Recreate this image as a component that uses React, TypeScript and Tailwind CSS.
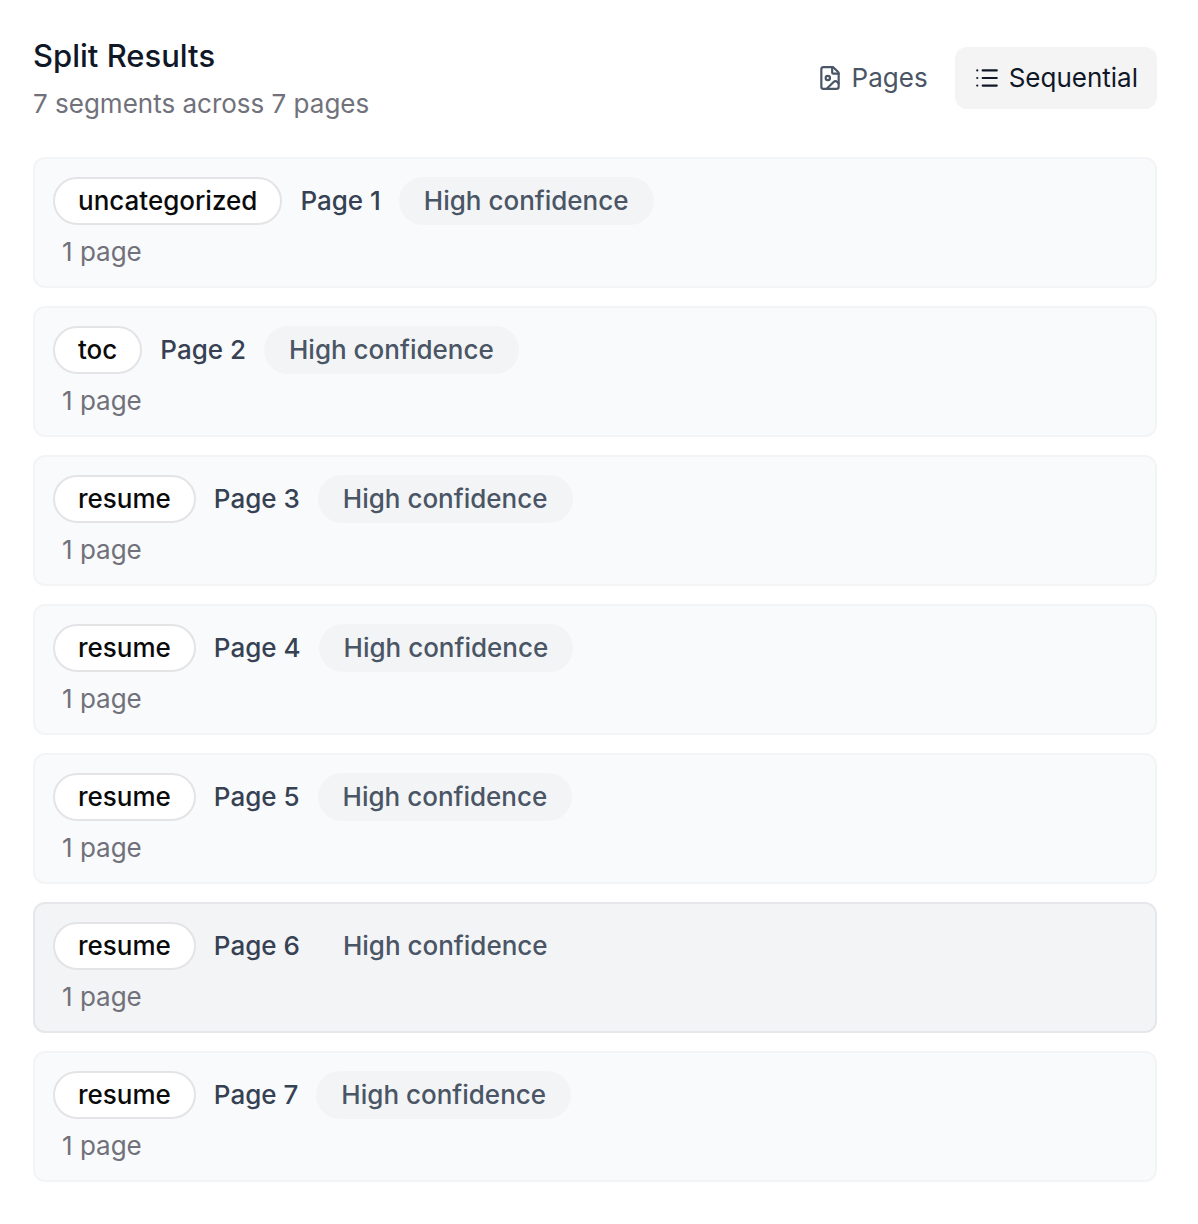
import { FileImage, List } from 'lucide-react';

type Segment = {
	category: string;
	page: number;
	active?: boolean;
};

const segments: Segment[] = [
	{ category: 'uncategorized', page: 1 },
	{ category: 'toc', page: 2 },
	{ category: 'resume', page: 3 },
	{ category: 'resume', page: 4 },
	{ category: 'resume', page: 5 },
	{ category: 'resume', page: 6, active: true },
	{ category: 'resume', page: 7 },
];

function SegmentCard({ category, page, active }: Segment) {
	return (
		<li
			className={`rounded-xl border-2 px-[18px] pt-[18px] pb-4 ${
				active ? 'border-gray-200 bg-gray-100' : 'border-gray-100 bg-gray-50'
			}`}
		>
			<div className="flex items-center gap-[18px] text-[26px] leading-8 font-medium">
				<span className="rounded-full border-2 border-zinc-200 bg-white px-[23px] py-[6px] text-neutral-950">
					{category}
				</span>
				<span className="text-gray-700">Page {page}</span>
				<span className="rounded-full bg-gray-100 px-[25px] py-2 text-gray-600">
					High confidence
				</span>
			</div>
			<p className="mt-[9px] pl-[9px] text-[26px] leading-9 text-zinc-500">1 page</p>
		</li>
	);
}

export default function App() {
	return (
		<main className="bg-white pt-9 pr-[41px] pb-11 pl-[33px] font-['Inter',sans-serif]">
			<header className="flex items-center justify-between">
				<div>
					<h1 className="text-[31px] leading-10 font-medium text-gray-900">Split Results</h1>
					<p className="mt-3 text-[26px] leading-8 text-zinc-500">
						7 segments across 7 pages
					</p>
				</div>
				<div className="flex gap-2">
					<button
						type="button"
						className="flex items-center gap-[9px] rounded-xl px-[19px] py-[13px] text-[26px] leading-9 text-gray-600"
					>
						<FileImage size={26} />
						Pages
					</button>
					<button
						type="button"
						className="flex items-center gap-[9px] rounded-xl bg-zinc-100 px-[19px] py-[13px] text-[26px] leading-9 text-gray-900"
					>
						<List size={26} />
						Sequential
					</button>
				</div>
			</header>
			<ul className="mt-[37px] flex flex-col gap-[18px]">
				{segments.map((segment) => (
					<SegmentCard key={segment.page} {...segment} />
				))}
			</ul>
		</main>
	);
}
